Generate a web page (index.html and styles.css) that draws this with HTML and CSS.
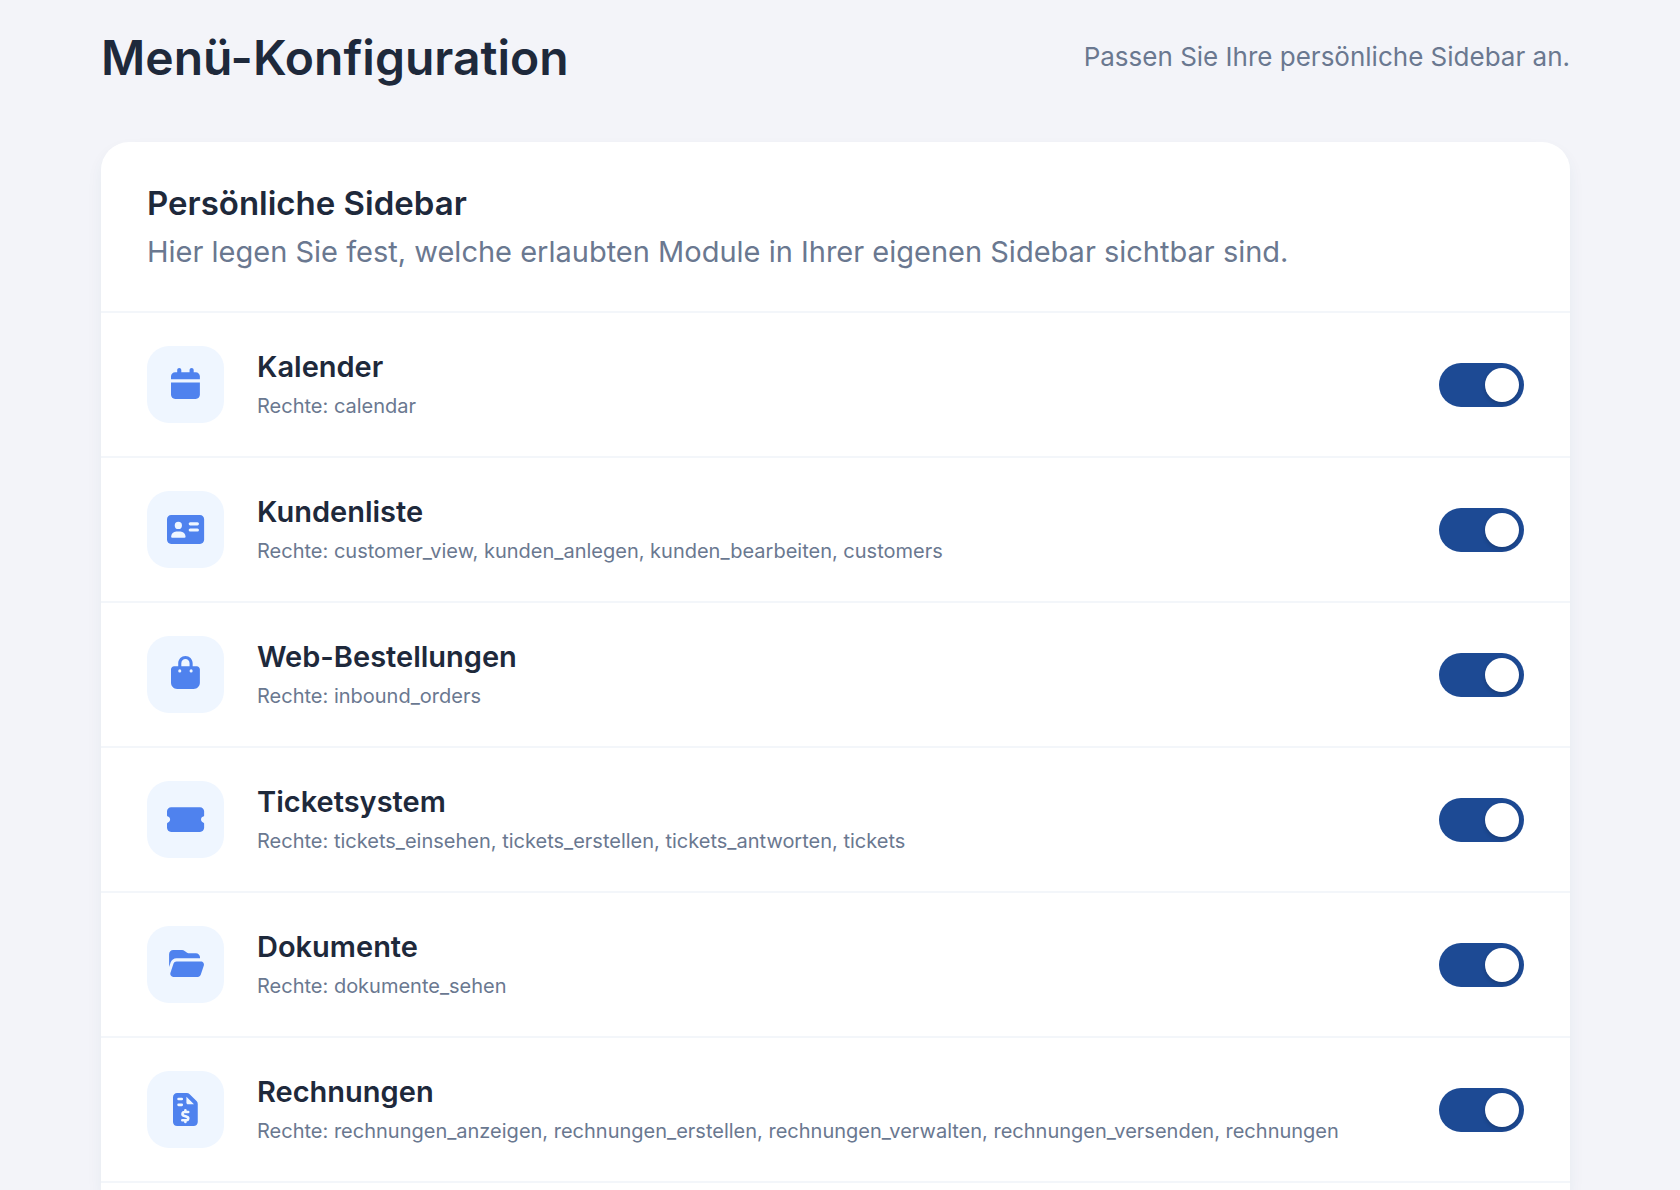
FILE: index.html
```html
<!DOCTYPE html>
<html lang="de">
<head>
    <meta charset="UTF-8">
    <meta name="viewport" content="width=device-width, initial-scale=1.0">
    <title>Menü-Konfiguration</title>
    <link rel="stylesheet" href="styles.css">
</head>
<body>
    <header class="page-header">
        <h1>Menü-Konfiguration</h1>
        <p>Passen Sie Ihre persönliche Sidebar an.</p>
    </header>

    <main class="card">
        <div class="card-header">
            <h2>Persönliche Sidebar</h2>
            <p>Hier legen Sie fest, welche erlaubten Module in Ihrer eigenen Sidebar sichtbar sind.</p>
        </div>

        <ul class="module-list">
            <li class="module">
                <span class="module-icon">
                    <svg viewBox="0 0 448 512"><path d="M128 0C110.3 0 96 14.3 96 32l0 32-32 0C28.7 64 0 92.7 0 128l0 48 448 0 0-48c0-35.3-28.7-64-64-64l-32 0 0-32c0-17.7-14.3-32-32-32s-32 14.3-32 32l0 32-128 0 0-32c0-17.7-14.3-32-32-32zM0 224L0 416c0 35.3 28.7 64 64 64l320 0c35.3 0 64-28.7 64-64l0-192-448 0z"/></svg>
                </span>
                <label class="module-text" for="mod-kalender">
                    <span class="module-name">Kalender</span>
                    <span class="module-rights">Rechte: calendar</span>
                </label>
                <input class="toggle" type="checkbox" role="switch" id="mod-kalender" checked>
            </li>

            <li class="module">
                <span class="module-icon">
                    <svg viewBox="0 0 576 512"><path fill-rule="evenodd" d="M64 32C28.7 32 0 60.7 0 96V416c0 35.3 28.7 64 64 64H512c35.3 0 64-28.7 64-64V96c0-35.3-28.7-64-64-64H64zM176 136a56 56 0 1 1 0 112a56 56 0 1 1 0-112zM80 384a16 16 0 0 1-16-16a80 80 0 0 1 80-80H208a80 80 0 0 1 80 80a16 16 0 0 1-16 16H80zM360 144H472a24 24 0 0 1 0 48H360a24 24 0 0 1 0-48zM360 240H472a24 24 0 0 1 0 48H360a24 24 0 0 1 0-48z"/></svg>
                </span>
                <label class="module-text" for="mod-kunden">
                    <span class="module-name">Kundenliste</span>
                    <span class="module-rights">Rechte: customer_view, kunden_anlegen, kunden_bearbeiten, customers</span>
                </label>
                <input class="toggle" type="checkbox" role="switch" id="mod-kunden" checked>
            </li>

            <li class="module">
                <span class="module-icon">
                    <svg viewBox="0 0 448 512"><path fill-rule="evenodd" d="M160 80c0-35.3 28.7-64 64-64s64 28.7 64 64l0 48-128 0 0-48zm-48 48l-64 0c-26.5 0-48 21.5-48 48L0 384c0 53 43 96 96 96l256 0c53 0 96-43 96-96l0-208c0-26.5-21.5-48-48-48l-64 0 0-48c0-61.9-50.1-112-112-112S112 18.1 112 80l0 48zm24 48a24 24 0 1 1 0 48 24 24 0 1 1 0-48zm152 24a24 24 0 1 1 48 0 24 24 0 1 1-48 0z"/></svg>
                </span>
                <label class="module-text" for="mod-bestellungen">
                    <span class="module-name">Web-Bestellungen</span>
                    <span class="module-rights">Rechte: inbound_orders</span>
                </label>
                <input class="toggle" type="checkbox" role="switch" id="mod-bestellungen" checked>
            </li>

            <li class="module">
                <span class="module-icon">
                    <svg viewBox="0 0 576 512"><path d="M64 64C28.7 64 0 92.7 0 128l0 64c0 8.8 7.4 15.7 15.7 18.6 18.8 6.5 32.3 24.4 32.3 45.4s-13.5 38.9-32.3 45.4C7.4 304.3 0 311.2 0 320l0 64c0 35.3 28.7 64 64 64l448 0c35.3 0 64-28.7 64-64l0-64c0-8.8-7.4-15.7-15.7-18.6-18.8-6.5-32.3-24.4-32.3-45.4s13.5-38.9 32.3-45.4c8.3-2.9 15.7-9.8 15.7-18.6l0-64c0-35.3-28.7-64-64-64L64 64z"/></svg>
                </span>
                <label class="module-text" for="mod-tickets">
                    <span class="module-name">Ticketsystem</span>
                    <span class="module-rights">Rechte: tickets_einsehen, tickets_erstellen, tickets_antworten, tickets</span>
                </label>
                <input class="toggle" type="checkbox" role="switch" id="mod-tickets" checked>
            </li>

            <li class="module">
                <span class="module-icon">
                    <svg viewBox="0 0 576 512"><path d="M56 225.6L32.4 296.2 32.4 96c0-35.3 28.7-64 64-64l138.7 0c13.8 0 27.3 4.5 38.4 12.8l38.4 28.8c5.5 4.2 12.3 6.4 19.2 6.4l117.3 0c35.3 0 64 28.7 64 64l0 16-365.4 0c-41.3 0-78 26.4-91.1 65.6zM477.8 448L99 448c-32.8 0-55.9-32.1-45.5-63.2l48-144C108 221.2 126.4 208 147 208l378.8 0c32.8 0 55.9 32.1 45.5 63.2l-48 144c-6.5 19.6-24.9 32.8-45.5 32.8z"/></svg>
                </span>
                <label class="module-text" for="mod-dokumente">
                    <span class="module-name">Dokumente</span>
                    <span class="module-rights">Rechte: dokumente_sehen</span>
                </label>
                <input class="toggle" type="checkbox" role="switch" id="mod-dokumente" checked>
            </li>

            <li class="module">
                <span class="module-icon">
                    <svg viewBox="0 0 384 512">
                        <path fill-rule="evenodd" d="M0 64C0 28.7 28.7 0 64 0L213.5 0c17 0 33.3 6.7 45.3 18.7L365.3 125.3c12 12 18.7 28.3 18.7 45.3L384 448c0 35.3-28.7 64-64 64L64 512c-35.3 0-64-28.7-64-64L0 64zm208-5.5l0 93.5c0 13.3 10.7 24 24 24L325.5 176 208 58.5z"/>
                        <path class="cutout" d="M86 92h50M86 184h50M236 296h-58a29 29 0 0 0-9 57l46 14a29 29 0 0 1-9 57h-62M192 268v28M192 424v24"/>
                    </svg>
                </span>
                <label class="module-text" for="mod-rechnungen">
                    <span class="module-name">Rechnungen</span>
                    <span class="module-rights">Rechte: rechnungen_anzeigen, rechnungen_erstellen, rechnungen_verwalten, rechnungen_versenden, rechnungen</span>
                </label>
                <input class="toggle" type="checkbox" role="switch" id="mod-rechnungen" checked>
            </li>
        </ul>
    </main>
</body>
</html>
```

FILE: styles.css
```css
* {
    box-sizing: border-box;
    margin: 0;
    padding: 0;
}
body {
    display: flex;
    flex-direction: column;
    min-height: 100vh;
    padding: 24px 110px 0 101px;
    background: #f3f4f9;
    color: #1e293b;
    font-family: "Inter", sans-serif;
}
.page-header {
    display: flex;
    justify-content: space-between;
    align-items: flex-start;
    margin-bottom: 50px;
}
.page-header h1 {
    font-size: 48px;
    font-weight: 600;
    line-height: 68px;
}
.page-header p {
    color: #6a7890;
    font-size: 26px;
    line-height: 66px;
}
.card {
    flex: 1;
    background: #fff;
    border-radius: 28px 28px 0 0;
    box-shadow: 0 8px 16px rgba(30, 80, 110, 0.06);
}
.card-header {
    padding: 36px 46px 35px;
    border-bottom: 2px solid #f3f6fa;
}
.card-header h2 {
    font-size: 33px;
    font-weight: 600;
    line-height: 50px;
}
.card-header p {
    color: #6a7890;
    font-size: 29px;
    line-height: 48px;
}
.module-list {
    list-style: none;
}
.module {
    display: flex;
    align-items: center;
    gap: 33px;
    padding: 33px 46px;
    border-bottom: 2px solid #f3f6fa;
}
.module-icon {
    display: flex;
    flex: none;
    align-items: center;
    justify-content: center;
    width: 77px;
    height: 77px;
    border-radius: 22px;
    background: #eff6ff;
}
.module-icon svg {
    height: 33px;
    fill: #4f82ee;
    overflow: visible;
}
.module-icon .cutout {
    fill: none;
    stroke: #eff6ff;
    stroke-width: 40;
    stroke-linecap: round;
}
.module-text {
    display: flex;
    flex: 1;
    flex-direction: column;
    gap: 3px;
}
.module-name {
    font-size: 29px;
    font-weight: 600;
    line-height: 40px;
}
.module-rights {
    color: #6a7890;
    font-size: 20px;
    line-height: 32px;
}
.toggle {
    appearance: none;
    display: flex;
    flex: none;
    align-items: center;
    width: 85px;
    height: 44px;
    padding: 5px;
    border-radius: 22px;
    background: #cbd5e1;
    cursor: pointer;
}
.toggle::before {
    content: "";
    width: 34px;
    height: 34px;
    border-radius: 50%;
    background: #fff;
    box-shadow: 0 2px 4px rgba(0, 0, 0, 0.2);
}
.toggle:checked {
    justify-content: flex-end;
    background: #1d4a94;
}
```
